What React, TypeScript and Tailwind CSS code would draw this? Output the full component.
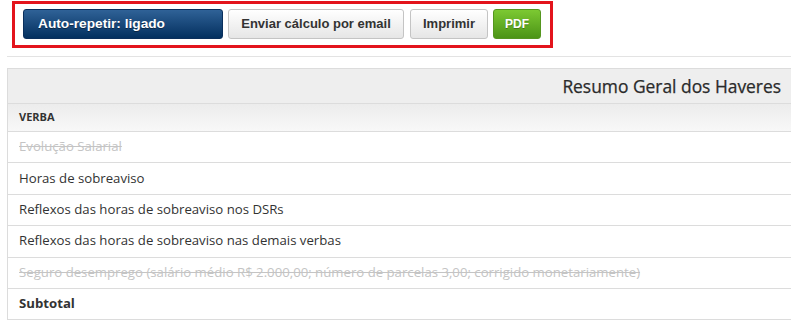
import React from "react";

const rows: { label: string; struck?: boolean; bold?: boolean }[] = [
  { label: "Evolução Salarial", struck: true },
  { label: "Horas de sobreaviso" },
  { label: "Reflexos das horas de sobreaviso nos DSRs" },
  { label: "Reflexos das horas de sobreaviso nas demais verbas" },
  {
    label:
      "Seguro desemprego (salário médio R$ 2.000,00; número de parcelas 3,00; corrigido monetariamente)",
    struck: true,
  },
  { label: "Subtotal", bold: true },
];

export default function App() {
  return (
    <div className="w-[791px] h-[323px] overflow-hidden bg-white">
      <div className="pt-[1px] pl-[12px]">
        <div className="w-[541px] h-[47px] border-[3px] border-[#e3141c] flex items-start pt-[5px] pl-[8px] gap-[5px] font-['Liberation_Sans',sans-serif] font-bold text-[13px]">
          <button className="w-[200px] h-[30px] rounded-[3px] border border-[#0a2f5c] bg-gradient-to-b from-[#2f6297] to-[#03305f] text-white text-left pl-[14px] text-[13.7px] [text-shadow:0_1px_0_rgba(0,0,0,0.4)]">
            Auto-repetir: ligado
          </button>
          <button className="w-[176px] h-[30px] rounded-[3px] border border-[#c4c4c4] bg-gradient-to-b from-[#ffffff] to-[#e6e6e6] text-[#333]">
            Enviar cálculo por email
          </button>
          <button className="w-[78px] h-[30px] rounded-[3px] border border-[#c4c4c4] bg-gradient-to-b from-[#ffffff] to-[#e6e6e6] text-[#333] ml-[1px]">
            Imprimir
          </button>
          <button className="w-[48px] h-[30px] rounded-[3px] border border-[#55961f] bg-gradient-to-b from-[#7cc932] to-[#4c9416] text-white text-[12px] [text-shadow:0_1px_0_rgba(0,0,0,0.3)]">
            PDF
          </button>
        </div>
      </div>
      <div className="mt-[8px] ml-[7px] h-px bg-[#e3e3e3]" />
      <div className="mt-[11px] ml-[7px] w-[800px] border-l border-t border-[#dcdcdc] font-['Open_Sans',sans-serif] text-[#333]">
        <div className="h-[35px] bg-[#eeeeee] border-b border-[#dcdcdc] flex items-center justify-end pr-[26px] text-[17.4px] text-[#2a2a2a] [-webkit-text-stroke:0.25px_#2a2a2a]">
          Resumo Geral dos Haveres
        </div>
        <div className="h-[28px] bg-gradient-to-b from-[#ececec] to-[#f8f8f8] border-b border-[#dcdcdc] flex items-center pl-[11px] text-[11px] font-bold">
          VERBA
        </div>
        {rows.map((r) => (
          <div
            key={r.label}
            className={
              "h-[31.4px] border-b border-[#dcdcdc] flex items-center pl-[11px] text-[13.2px] whitespace-nowrap " +
              (r.struck ? "line-through text-[#c4c4c4]" : "") +
              (r.bold ? " font-bold" : "")
            }
          >
            {r.label}
          </div>
        ))}
      </div>
    </div>
  );
}
